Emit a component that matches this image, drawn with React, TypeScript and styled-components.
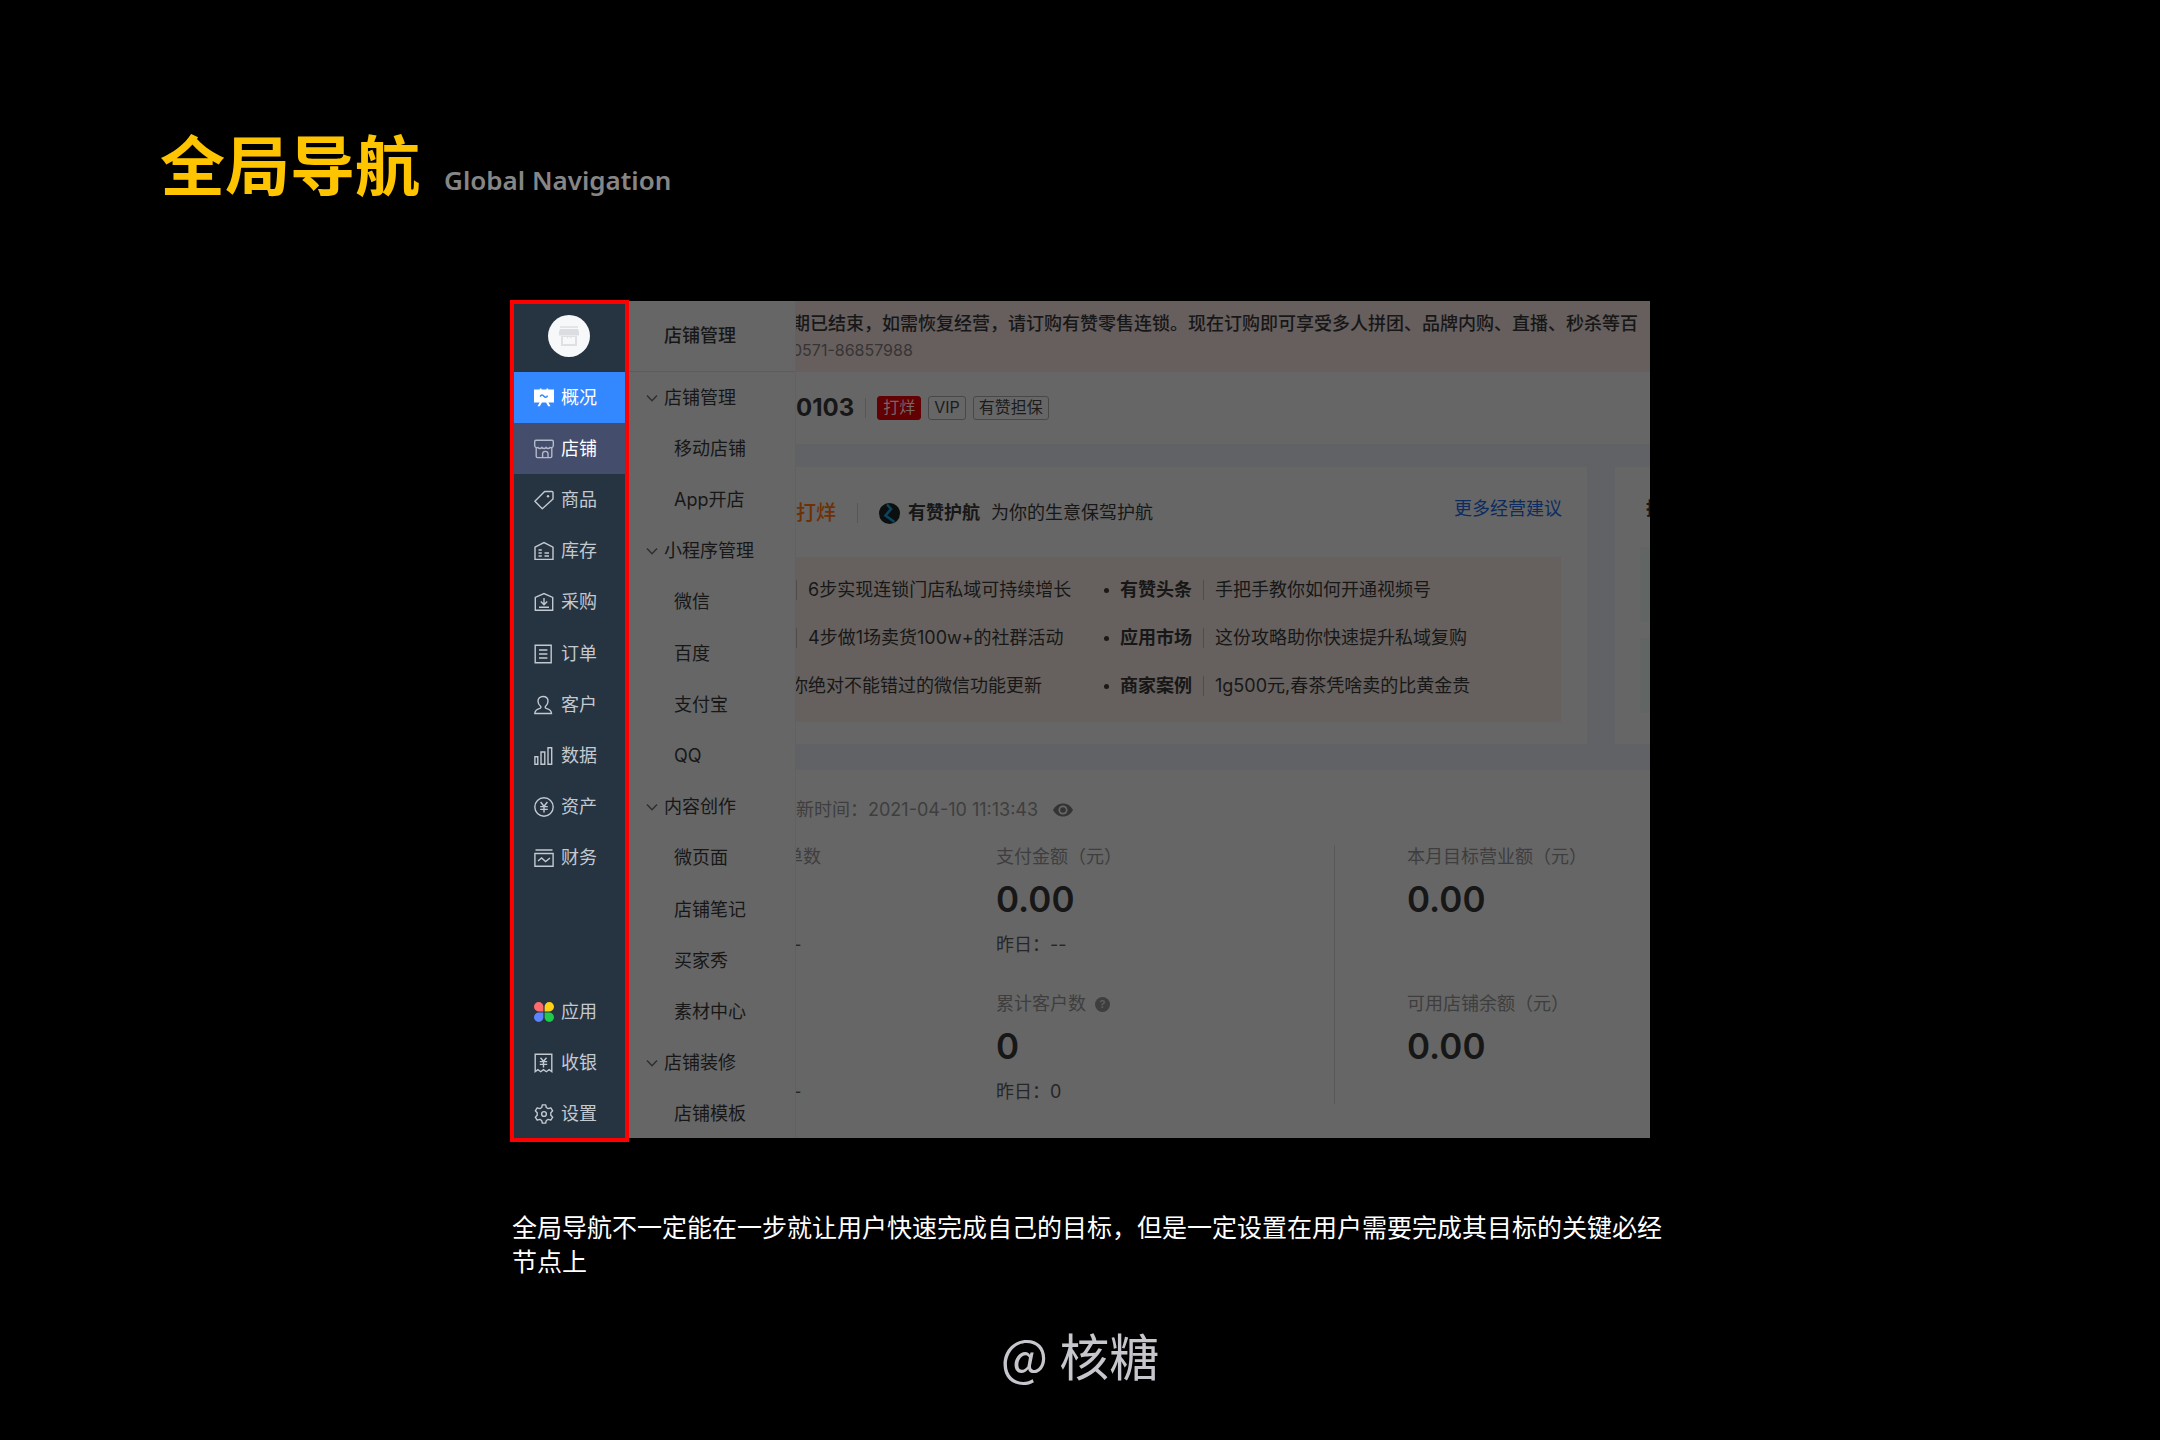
import React from "react";
import styled, { createGlobalStyle, css } from "styled-components";

const GlobalStyle = createGlobalStyle`
  *, *::before, *::after { box-sizing: border-box; }
  body {
    margin: 0;
    background: #000;
    font-family: Inter, "Noto Sans CJK SC", sans-serif;
    font-size: 18px;
    line-height: 24px;
  }
  h1, h2, p, ul, dl, dd, dt { margin: 0; padding: 0; font: inherit; }
  ul { list-style: none; }
  a { color: inherit; text-decoration: none; }
  button { margin: 0; padding: 0; border: 0; background: none; color: inherit; font: inherit; cursor: pointer; }
`;

const Page = styled.div`
  min-height: 100vh;
  padding: 126px 0 16px;
  background: #000;
`;

const PageHeader = styled.header`
  display: flex;
  align-items: baseline;
  gap: 24px;
  height: 72px;
  padding: 0 160px;
  line-height: 72px;
`;

const Title = styled.h1`
  color: #ffc400;
  font-family: "Noto Sans CJK SC", sans-serif;
  font-size: 65px;
  font-weight: 700;
`;

const Subtitle = styled.p`
  color: #868686;
  font-family: "Noto Sans", sans-serif;
  font-size: 26px;
  font-weight: 600;
`;

const Figure = styled.main`
  width: 100%;
  max-width: 1140px;
  margin: 102px auto 0;
`;

const Showcase = styled.div`
  display: grid;
  grid-template-columns: 119px minmax(0, 1fr);
`;

const GlobalNav = styled.nav`
  overflow: hidden;
  border: 4px solid #fe0000;
  background: #263340;
  color: #c3c9d0;
`;

const Brand = styled.div`
  display: flex;
  align-items: center;
  justify-content: center;
  height: 68px;
  padding: 0 2px 4px 0;
`;

const Avatar = styled.a`
  display: flex;
  align-items: center;
  justify-content: center;
  width: 42px;
  height: 42px;
  border-radius: 50%;
  background: #f7f8fa;
`;

const menuRows = css`
  display: grid;
  grid-template-rows: repeat(15, 1fr);
  height: 768px;
  margin-bottom: -2px;
`;

const NavList = styled.ul`
  ${menuRows}
`;

const NavItem = styled.li<{ $row: number }>`
  grid-row: ${(p) => p.$row};
  display: grid;
`;

const NavLink = styled.a<{ $state?: "active" | "hover" }>`
  display: flex;
  align-items: center;
  gap: 7px;
  padding-left: 20px;
  ${(p) => p.$state === "active" && css`background: #3388ff; color: #fff;`}
  ${(p) => p.$state === "hover" && css`background: #444d6b; color: #fff;`}

  svg { flex: none; }
`;

const Screen = styled.div`
  display: grid;
  grid-template-columns: 167px minmax(0, 1fr);
  margin: 1px 0 4px;
  overflow: hidden;
  background: #666;
  color: #171717;
`;

const SubNav = styled.nav`
  border-right: 1px solid #616161;
`;

const SubNavTitle = styled.h2`
  display: flex;
  align-items: center;
  height: 71px;
  padding-left: 35px;
  border-bottom: 1px solid #5c5c5c;
  font-weight: 500;
`;

const SubNavList = styled.ul`
  ${menuRows}
`;

const SubNavItem = styled.li`
  display: grid;
`;

const GroupButton = styled.button`
  display: flex;
  align-items: center;
  gap: 6px;
  padding-left: 17px;
`;

const SubLink = styled.a`
  display: flex;
  align-items: center;
  padding-left: 45px;
`;

const Workspace = styled.section`
  overflow: hidden;
`;

const Track = styled.div`
  display: flex;
  flex-direction: column;
  margin-left: -11px;
  height: 100%;
`;

const Banner = styled.div`
  height: 71px;
  padding: 9px 0 0 7px;
  background: #665f5e;
  white-space: nowrap;
`;

const BannerTitle = styled.p`
  font-weight: 500;
  line-height: 28px;
`;

const BannerPhone = styled.p`
  color: #373434;
  font-size: 16px;
`;

const StoreBar = styled.div`
  display: flex;
  align-items: center;
  gap: 7px;
  height: 72px;
  padding-left: 11px;
`;

const StoreName = styled.p`
  font-size: 24px;
  font-weight: 700;
`;

const Rule = styled.span<{ $space: number }>`
  width: 1px;
  height: 20px;
  margin: 0 ${(p) => p.$space}px;
  background: #565656;
`;

const Tag = styled.span<{ $filled?: boolean }>`
  height: 24px;
  padding: 0 5px;
  border: 1px solid ${(p) => (p.$filled ? "#620004" : "#484848")};
  border-radius: 3px;
  background: ${(p) => (p.$filled ? "#620004" : "transparent")};
  color: ${(p) => (p.$filled ? "#766666" : "#1c1c1c")};
  font-size: 16px;
  line-height: 21px;
`;

const Cards = styled.div`
  display: grid;
  grid-template-columns: 802px minmax(0, 1fr);
  gap: 28px;
  padding: 23px 0 26px;
  background: #616265;
`;

const Card = styled.section`
  overflow: hidden;
  padding-bottom: 22px;
  background: #666;
`;

const CardHead = styled.div`
  display: flex;
  align-items: flex-start;
  justify-content: space-between;
  height: 90px;
  padding: 30px 25px 0 11px;
`;

const CardTitle = styled.div`
  display: flex;
  align-items: center;
  height: 32px;
`;

const Status = styled.span`
  color: #6e3004;
  font-size: 20px;
  font-weight: 500;
`;

const Escort = styled.strong`
  margin: 0 11px 0 8px;
  font-weight: 700;
`;

const MoreLink = styled.a`
  color: #0c2c60;
`;

const Articles = styled.div`
  display: grid;
  grid-template-columns: 319px minmax(0, 1fr);
  grid-auto-rows: 48px;
  margin-right: 26px;
  padding: 9px 0 12px;
  background: #66615e;
  white-space: nowrap;
`;

const Article = styled.div`
  display: flex;
  align-items: center;
`;

const Bullet = styled.span`
  width: 5px;
  height: 5px;
  margin-right: 11px;
  border-radius: 50%;
  background: #1a1918;
`;

const Category = styled.strong`
  font-weight: 700;
`;

const ArticleLink = styled.a<{ $ruled?: boolean }>`
  margin-left: 5px;
  line-height: 20px;
  ${(p) => p.$ruled && css`
    margin-left: 11px;
    padding-left: 11px;
    border-left: 1px solid #4f4c49;
  `}
`;

const PromoHead = styled.div`
  height: 80px;
  padding: 30px 0 0 31px;
  font-weight: 700;
`;

const PromoList = styled.div`
  display: grid;
  grid-auto-rows: 75px;
  gap: 16px;
  margin-left: 25px;
`;

const PromoTile = styled.span`
  background: #616564;
`;

const Stats = styled.section`
  flex: 1;
  padding-top: 28px;
`;

const Updated = styled.div`
  display: flex;
  align-items: center;
  gap: 15px;
  padding-left: 11px;
  color: #3e3e3e;
`;

const StatGrid = styled.div`
  display: grid;
  grid-template-columns: 211px 338px minmax(0, 1fr);
  margin-top: 23px;
  white-space: nowrap;
`;

const StatColumn = styled.div<{ $ruled?: boolean }>`
  display: grid;
  grid-auto-rows: 112px;
  gap: 35px;
  ${(p) => p.$ruled && css`
    padding-left: 72px;
    border-left: 1px solid #595959;
  `}
`;

const Stat = styled.dl`
  display: grid;
  grid-template-rows: 24px 44px 24px;
  gap: 10px;
`;

const StatLabel = styled.dt`
  display: flex;
  align-items: center;
  gap: 9px;
  color: #3e3e3e;
`;

const StatValue = styled.dd`
  grid-row: 2;
  font-size: 35px;
  font-weight: 600;
  line-height: 40px;
`;

const StatFoot = styled.dd`
  grid-row: 3;
  color: #262626;
`;

const Help = styled.span`
  display: flex;
  align-items: center;
  justify-content: center;
  width: 15px;
  height: 15px;
  border-radius: 50%;
  background: #3e3e3e;
  color: #5e5e5e;
  font-size: 11px;
  font-weight: 600;
`;

const Caption = styled.p`
  margin: 67px -12px 0 2px;
  color: #fff;
  font-family: "Noto Sans CJK SC", sans-serif;
  font-size: 25px;
  line-height: 34px;
`;

const Credit = styled.footer`
  margin-top: 41px;
  color: #c6c7cc;
  font-family: "Noto Sans CJK SC", sans-serif;
  font-size: 50px;
  line-height: 72px;
  text-align: center;
`;

function Icon({ children, size = 20 }: { children: React.ReactNode; size?: number }) {
  return (
    <svg width={size} height={size} viewBox="0 0 20 20" fill="none" stroke="currentColor" strokeWidth="1.4" aria-hidden="true">
      {children}
    </svg>
  );
}

const icons = {
  overview: (
    <Icon>
      <path d="M0 1.500H5.800V.4h1.700v1.100h5V.4h1.700v1.100H20v13h-5.600l2.100 3.800h-2.300l-2.100-3.800H7.900l-2.100 3.800H3.500l2.100-3.800H0z" fill="currentColor" stroke="none" />
      <path d="M6.200 8.600c1-2.200 2.500-2 3.700-.4s2.500 1.600 3.700-.6" stroke="#3388ff" strokeWidth="1.500" />
    </Icon>
  ),
  shop: (
    <Icon>
      <path d="M2 1.200h16c.8 0 1.300.5 1.300 1.300v4.200a2.200 2.200 0 0 1-3.200 1.800 2.600 2.600 0 0 1-4 0 2.600 2.600 0 0 1-4.200 0 2.600 2.600 0 0 1-4 0A2.200 2.200 0 0 1 .7 6.700V2.500c0-.8.5-1.300 1.300-1.300z" stroke="#b4bac8" />
      <path d="M2.200 9v8.300c0 .8.5 1.300 1.300 1.300h13c.8 0 1.300-.5 1.300-1.300V9M8.600 18.600v-4c0-1.200 1-2.200 2.700-2.200s2.700 1 2.700 2.200v4" stroke="#b4bac8" />
    </Icon>
  ),
  goods: (
    <Icon>
      <path d="M10.600 1.500h7.300c.7 0 1.100.4 1.100 1.100v6.300L8.300 18.700.9 11.200z" strokeLinejoin="round" />
      <circle cx="14" cy="6.200" r="1.200" fill="currentColor" stroke="none" />
    </Icon>
  ),
  stock: (
    <Icon>
      <path d="M1 6.200 10 1.600l9 4.600v12.200H1z" />
      <path d="M4.500 9h3.300M4.500 12h3.300M4.500 15h3.300M10.500 12H15M10.500 15H15" />
    </Icon>
  ),
  purchase: (
    <Icon>
      <path d="M1.300 5.400 10 1.600l8.700 3.800v12.900H1.300z" />
      <path d="M10 6v6.500M6.800 9.600 10 12.700l3.200-3.100M5 15.200h10" />
    </Icon>
  ),
  order: (
    <Icon>
      <path d="M1.200 1.200h16v17.600h-16zM5 6h8.400M5 10h8.400M5 14h8.400" />
    </Icon>
  ),
  customer: (
    <Icon>
      <path d="M9 1.500c3 0 5 2 5 4.800 0 2-1 3.600-2.400 5-.8.900-.4 1.700.6 2.100 3 .9 5.300 2 5.300 5.100H.8c0-3.100 2.200-4.200 5.100-5.100 1-.4 1.400-1.200.6-2.100C5 9.900 4 8.300 4 6.300c0-2.800 2-4.800 5-4.800z" />
    </Icon>
  ),
  data: (
    <Icon>
      <path d="M.9 10.800h2.900v7.500H.9zM7 6h3.800v12.300H7zM14 1.800h3.700v16.500H14z" />
    </Icon>
  ),
  asset: (
    <Icon>
      <circle cx="10" cy="10" r="9.200" />
      <path d="m6.600 5 3.400 4.300L13.400 5M10 9.300v6.200M6.200 9.600h7.600M6.200 12.400h7.600" />
    </Icon>
  ),
  finance: (
    <Icon>
      <path d="M1.500 2h17M.9 5.500h18.200v12.700H.9z" />
      <path d="m4 13 3.600-3 4 3.600 4.400-3.600" />
    </Icon>
  ),
  apps: (
    <Icon>
      <g stroke="none">
        <path d="M4.700 0a4.700 4.700 0 0 1 4.700 4.700v4.700H4.700a4.700 4.700 0 0 1 0-9.400z" fill="#ff6b6b" />
        <path d="M15.300 0a4.700 4.700 0 0 1 0 9.400h-4.700V4.700A4.700 4.700 0 0 1 15.300 0z" fill="#ffd014" />
        <path d="M4.700 20A4.700 4.700 0 0 1 4.700 10.600h4.700v4.700A4.700 4.700 0 0 1 4.700 20z" fill="#5b83ff" />
        <path d="M15.300 20a4.700 4.700 0 0 1-4.700-4.700v-4.700h4.700a4.700 4.700 0 0 1 0 9.400z" fill="#1ecb4b" />
      </g>
    </Icon>
  ),
  cashier: (
    <Icon>
      <path d="M1.200 18.600V1.300h16.600v17.300l-2.700-1.900-2.800 2-2.800-2-2.800 2-2.800-2z" />
      <path d="m6.500 4.800 3 3.500 3-3.500M9.500 8.300v6.300M5.800 8.600h7.400M5.800 11.400h7.400" />
    </Icon>
  ),
  settings: (
    <Icon>
      <path d="M8.300.9h3.400l.6 2.600 1.900 1.100 2.600-.8 1.900 3-1.900 1.900v2.600l1.900 1.900-1.900 3-2.600-.8-1.900 1.100-.6 2.600H8.300l-.6-2.600-1.900-1.100-2.600.8-1.900-3 1.900-1.900V8.700L1.300 6.800l1.900-3 2.600.8 1.900-1.100z" strokeLinejoin="round" />
      <circle cx="10" cy="10" r="2.400" />
    </Icon>
  ),
};

type NavEntry = { row: number; label: string; icon: keyof typeof icons; state?: "active" | "hover" };

const navEntries: NavEntry[] = [
  { row: 1, label: "概况", icon: "overview", state: "active" },
  { row: 2, label: "店铺", icon: "shop", state: "hover" },
  { row: 3, label: "商品", icon: "goods" },
  { row: 4, label: "库存", icon: "stock" },
  { row: 5, label: "采购", icon: "purchase" },
  { row: 6, label: "订单", icon: "order" },
  { row: 7, label: "客户", icon: "customer" },
  { row: 8, label: "数据", icon: "data" },
  { row: 9, label: "资产", icon: "asset" },
  { row: 10, label: "财务", icon: "finance" },
  { row: 13, label: "应用", icon: "apps" },
  { row: 14, label: "收银", icon: "cashier" },
  { row: 15, label: "设置", icon: "settings" },
];

const subEntries: { label: string; group?: boolean }[] = [
  { label: "店铺管理", group: true },
  { label: "移动店铺" },
  { label: "App开店" },
  { label: "小程序管理", group: true },
  { label: "微信" },
  { label: "百度" },
  { label: "支付宝" },
  { label: "QQ" },
  { label: "内容创作", group: true },
  { label: "微页面" },
  { label: "店铺笔记" },
  { label: "买家秀" },
  { label: "素材中心" },
  { label: "店铺装修", group: true },
  { label: "店铺模板" },
];

const articles = [
  { lead: "6步实现连锁门店私域可持续增长", ruled: true, category: "有赞头条", text: "手把手教你如何开通视频号" },
  { lead: "4步做1场卖货100w+的社群活动", ruled: true, category: "应用市场", text: "这份攻略助你快速提升私域复购" },
  { lead: "你绝对不能错过的微信功能更新", ruled: false, category: "商家案例", text: "1g500元,春茶凭啥卖的比黄金贵" },
];

function Chevron() {
  return (
    <svg width="12" height="12" viewBox="0 0 12 12" fill="none" stroke="#2e2e2e" strokeWidth="1.4" aria-hidden="true">
      <path d="M1 3.500 6 8.700l5-5.200" />
    </svg>
  );
}

export default function App() {
  return (
    <Page>
      <GlobalStyle />
      <PageHeader>
        <Title>全局导航</Title>
        <Subtitle>Global Navigation</Subtitle>
      </PageHeader>

      <Figure>
        <Showcase>
          <GlobalNav aria-label="全局导航">
            <Brand>
              <Avatar href="#" aria-label="店铺">
                <svg width="20" height="20" viewBox="0 0 20 20" aria-hidden="true">
                  <path d="M1 0h18v2H1z" fill="#e4e5e8" />
                  <path d="M1 3h18l1 3v3.500H0V6z" fill="#dcdde0" />
                  <path d="M2 10h16v10H2z" fill="#dfe0e3" />
                  <path d="M4 11h4v2l1.500-2H11l1.500 2v-2H16v7H4z" fill="#f7f8fa" />
                </svg>
              </Avatar>
            </Brand>
            <NavList>
              {navEntries.map((e) => (
                <NavItem key={e.label} $row={e.row}>
                  <NavLink href="#" $state={e.state}>
                    {icons[e.icon]}
                    {e.label}
                  </NavLink>
                </NavItem>
              ))}
            </NavList>
          </GlobalNav>

          <Screen>
            <SubNav aria-label="店铺管理">
              <SubNavTitle>店铺管理</SubNavTitle>
              <SubNavList>
                {subEntries.map((e) => (
                  <SubNavItem key={e.label}>
                    {e.group ? (
                      <GroupButton type="button">
                        <Chevron />
                        {e.label}
                      </GroupButton>
                    ) : (
                      <SubLink href="#">{e.label}</SubLink>
                    )}
                  </SubNavItem>
                ))}
              </SubNavList>
            </SubNav>

            <Workspace>
              <Track>
                <Banner>
                  <BannerTitle>
                    期已结束，如需恢复经营，请订购有赞零售连锁。现在订购即可享受多人拼团、品牌内购、直播、秒杀等百
                  </BannerTitle>
                  <BannerPhone>0571-86857988</BannerPhone>
                </Banner>

                <StoreBar>
                  <StoreName>0103</StoreName>
                  <Rule $space={4} />
                  <Tag $filled>打烊</Tag>
                  <Tag>VIP</Tag>
                  <Tag>有赞担保</Tag>
                </StoreBar>

                <Cards>
                  <Card>
                    <CardHead>
                      <CardTitle>
                        <Status>打烊</Status>
                        <Rule $space={21} />
                        <svg width="21" height="21" viewBox="0 0 21 21" aria-hidden="true">
                          <circle cx="10.500" cy="10.500" r="10.500" fill="#0c0f10" />
                          <path d="M8 1.500 12 6 6.500 12.500 15.500 19" fill="none" stroke="#0b4560" strokeWidth="2.600" />
                        </svg>
                        <Escort>有赞护航</Escort>
                        为你的生意保驾护航
                      </CardTitle>
                      <MoreLink href="#">更多经营建议</MoreLink>
                    </CardHead>
                    <Articles>
                      {articles.map((a) => (
                        <React.Fragment key={a.category}>
                          <Article>
                            <ArticleLink href="#" $ruled={a.ruled}>{a.lead}</ArticleLink>
                          </Article>
                          <Article>
                            <Bullet />
                            <Category>{a.category}</Category>
                            <ArticleLink href="#" $ruled>{a.text}</ArticleLink>
                          </Article>
                        </React.Fragment>
                      ))}
                    </Articles>
                  </Card>
                  <Card>
                    <PromoHead>推</PromoHead>
                    <PromoList>
                      <PromoTile />
                      <PromoTile />
                    </PromoList>
                  </Card>
                </Cards>

                <Stats>
                  <Updated>
                    <span>新时间：2021-04-10 11:13:43</span>
                    <svg width="20" height="14" viewBox="0 0 20 14" aria-hidden="true">
                      <path d="M0 7C2.500 2.500 6 .5 10 .5S17.500 2.500 20 7c-2.500 4.500-6 6.500-10 6.500S2.500 11.500 0 7z" fill="#343434" />
                      <circle cx="10" cy="7" r="4.600" fill="#666" />
                      <circle cx="10" cy="7" r="2.800" fill="#343434" />
                    </svg>
                  </Updated>
                  <StatGrid>
                    <StatColumn>
                      <Stat>
                        <StatLabel>单数</StatLabel>
                        <StatFoot>--</StatFoot>
                      </Stat>
                      <Stat>
                        <StatFoot>--</StatFoot>
                      </Stat>
                    </StatColumn>
                    <StatColumn>
                      <Stat>
                        <StatLabel>支付金额（元）</StatLabel>
                        <StatValue>0.00</StatValue>
                        <StatFoot>昨日：--</StatFoot>
                      </Stat>
                      <Stat>
                        <StatLabel>
                          累计客户数 <Help>?</Help>
                        </StatLabel>
                        <StatValue>0</StatValue>
                        <StatFoot>昨日：0</StatFoot>
                      </Stat>
                    </StatColumn>
                    <StatColumn $ruled>
                      <Stat>
                        <StatLabel>本月目标营业额（元）</StatLabel>
                        <StatValue>0.00</StatValue>
                      </Stat>
                      <Stat>
                        <StatLabel>可用店铺余额（元）</StatLabel>
                        <StatValue>0.00</StatValue>
                      </Stat>
                    </StatColumn>
                  </StatGrid>
                </Stats>
              </Track>
            </Workspace>
          </Screen>
        </Showcase>

        <Caption>
          全局导航不一定能在一步就让用户快速完成自己的目标，但是一定设置在用户需要完成其目标的关键必经节点上
        </Caption>
      </Figure>

      <Credit>@ 核糖</Credit>
    </Page>
  );
}
